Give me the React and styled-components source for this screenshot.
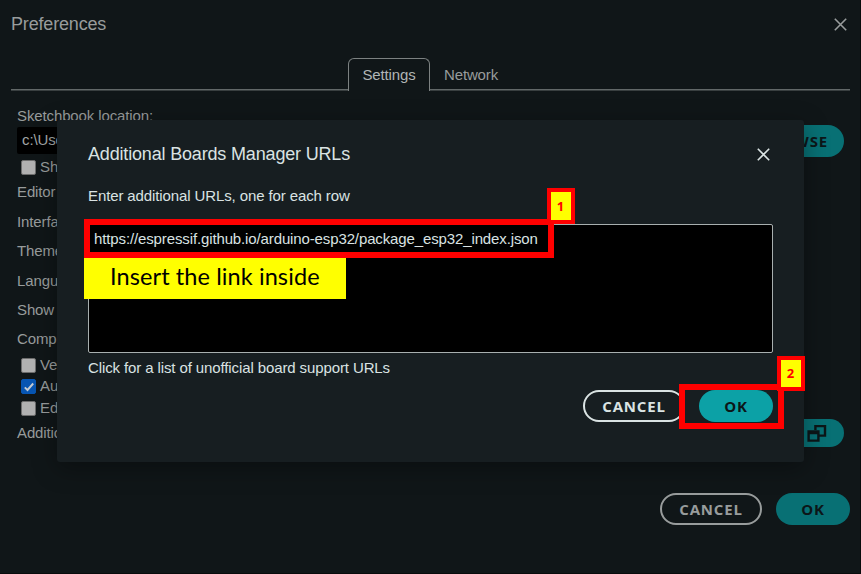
import React from 'react';
import styled, { createGlobalStyle, css } from 'styled-components';

const Global = createGlobalStyle`
  * { box-sizing: border-box; }
  body { margin: 0; background: #101618; font-family: "Liberation Sans", Arial, sans-serif; }
`;

const Window = styled.main`
  position: relative;
  width: 861px;
  height: 574px;
  overflow: hidden;
  display: flex;
  flex-direction: column;
  background: #101618;
  color: #989c9c;
  font-size: 15px;
  border-right: 1px solid #080b0c;
  border-bottom: 1px solid #080b0c;
`;

const WindowHeader = styled.header`
  display: flex;
  justify-content: space-between;
  align-items: center;
  height: 48px;
  padding: 0 12px 0 11px;
`;

const Title = styled.h1`
  margin: 0;
  font-size: 18px;
  line-height: 20px;
  font-weight: 400;
  letter-spacing: -0.17px;
`;

const CloseIcon = styled.svg`
  display: block;
  width: 15px;
  height: 15px;
  fill: none;
  stroke: currentColor;
  stroke-width: 1.6;
`;

const Close = () => (
  <CloseIcon viewBox="0 0 15 15"><path d="M1.8 1.8 13.2 13.2M13.2 1.8 1.8 13.2" /></CloseIcon>
);

const TabBar = styled.nav`
  display: flex;
  height: 43px;
  margin: 0 10px 0 11px;
  padding: 10px 0 0 337px;
  background: linear-gradient(#626868, #626868) 0 41px / 100% 1.5px no-repeat;
`;

const Tab = styled.div`
  height: 33px;
  width: ${(p) => p.$width}px;
  line-height: 34px;
  text-align: center;
  font-size: 15px;
  letter-spacing: -0.15px;
  ${(p) => p.$active && css`
    line-height: 32px;
    color: #b0b5b5;
    background: #101618;
    border: 1px solid #7c8181;
    border-bottom: 0;
    border-radius: 6px 6px 0 0;
  `}
`;

const Form = styled.section`
  display: flex;
  flex-direction: column;
  padding: 14px 16px 0 17px;
`;

const Row = styled.div`
  display: flex;
  align-items: center;
  flex: none;
  height: ${(p) => p.$height}px;
  padding-left: ${(p) => p.$indent || 0}px;
  letter-spacing: -0.12px;
  white-space: nowrap;
`;

const Label = styled.span`
  margin-top: -2px;
`;

const PathField = styled.div`
  flex: 1;
  height: 27px;
  margin-right: 10px;
  padding-left: 5px;
  line-height: 26px;
  color: #a2a6a6;
  background: #000;
  border-radius: 2px;
`;

const CheckBox = styled.span`
  display: flex;
  align-items: center;
  justify-content: center;
  width: 15px;
  height: 15px;
  margin-right: 4px;
  border: 1px solid ${(p) => (p.$checked ? '#0755b2' : '#6d6d6d')};
  border-radius: 2px;
  background: ${(p) => (p.$checked ? '#0755b2' : '#b1b1b1')};
`;

const Tick = () => (
  <svg width="12" height="12" viewBox="0 0 12 12" fill="none" stroke="#c4cbd2" strokeWidth="1.9">
    <path d="M1.8 6.3 4.5 9 10.2 2.5" />
  </svg>
);

const PillButton = styled.button`
  display: flex;
  align-items: center;
  justify-content: center;
  flex: none;
  width: ${(p) => p.$width}px;
  height: ${(p) => p.$height || 32}px;
  padding: 0;
  border-radius: 16px;
  font: 700 15px/20px "Open Sans", "Noto Sans", sans-serif;
  letter-spacing: 0.8px;
  border: ${(p) => (p.$outline ? '2px solid' : '0')};
  color: ${(p) => (p.$outline ? 'inherit' : '#0c1618')};
  background: ${(p) => (p.$outline ? 'transparent' : p.$bright ? '#0ca1a6' : '#087074')};
`;

const Spacer = styled.span`
  flex: 1;
`;

const WindowFooter = styled.footer`
  display: flex;
  justify-content: flex-end;
  gap: 14px;
  margin: 46px 10px 0 0;
`;

const Dialog = styled.section`
  position: absolute;
  left: 57px;
  top: 120px;
  width: 747px;
  height: 342px;
  padding: 0 31px;
  color: #dae3e3;
  background: #171e21;
  border-radius: 3px;
  box-shadow: 0 6px 24px rgba(0, 0, 0, 0.35);
`;

const DialogHeader = styled.header`
  display: flex;
  align-items: center;
  justify-content: space-between;
  height: 67px;
  padding: 1px 2px 0 0;
`;

const DialogText = styled.p`
  margin: 0;
  height: ${(p) => p.$height}px;
  line-height: 17px;
  letter-spacing: -0.11px;
`;

const UrlArea = styled.div`
  height: 129px;
  margin-bottom: 6px;
  padding: 5px 5px;
  line-height: 17px;
  letter-spacing: -0.125px;
  background: #000;
  border: 1px solid #a8afaf;
  border-radius: 2px;
`;

const DialogActions = styled.footer`
  display: flex;
  justify-content: flex-end;
  gap: 14px;
`;

const Highlight = styled.div`
  position: absolute;
  left: ${(p) => p.$x}px;
  top: ${(p) => p.$y}px;
  width: ${(p) => p.$width}px;
  height: ${(p) => p.$height}px;
  border: 6px solid #f00;
`;

const StepBadge = styled.div`
  position: absolute;
  left: ${(p) => p.$x}px;
  top: ${(p) => p.$y}px;
  width: 28px;
  height: ${(p) => p.$height}px;
  display: flex;
  align-items: center;
  justify-content: center;
  padding: 0 1px 1px 0;
  border: 4px solid #f00;
  color: #f00;
  background: #ff0;
  font: 700 13px/16px "Open Sans", sans-serif;
`;

const Callout = styled.div`
  position: absolute;
  left: 84px;
  top: 258px;
  width: 262px;
  height: 41px;
  padding-left: 26px;
  line-height: 37px;
  white-space: nowrap;
  color: #000;
  background: #ff0;
  font-family: Lato, sans-serif;
  font-size: 23.5px;
  letter-spacing: 0.1px;
`;

export default function App() {
  return (
    <>
      <Global />
      <Window>
        <WindowHeader><Title>Preferences</Title><Close /></WindowHeader>
        <TabBar>
          <Tab $active $width={82}>Settings</Tab>
          <Tab $width={82}>Network</Tab>
        </TabBar>
        <Form>
          <Row $height={20}>Sketchbook location:</Row>
          <Row $height={31}>
            <PathField>c:\Users</PathField>
            <PillButton $width={100}>BROWSE</PillButton>
          </Row>
          <Row $height={22} $indent={4}><CheckBox /><Label>Show</Label></Row>
          <Row $height={29}><Label>Editor</Label></Row>
          <Row $height={30}><Label>Interface</Label></Row>
          <Row $height={29}><Label>Theme</Label></Row>
          <Row $height={30}><Label>Language</Label></Row>
          <Row $height={29}><Label>Show</Label></Row>
          <Row $height={29}><Label>Compiler</Label></Row>
          <Row $height={22} $indent={4}><CheckBox /><Label>Verify</Label></Row>
          <Row $height={21} $indent={4}><CheckBox $checked><Tick /></CheckBox><Label>Auto</Label></Row>
          <Row $height={22} $indent={4}><CheckBox /><Label>Editor</Label></Row>
          <Row $height={28}>
            <Label>Additional</Label>
            <Spacer />
            <PillButton $width={55} $height={28}>
              <svg width="20" height="18" viewBox="0 0 20 18" fill="none" stroke="currentColor" strokeWidth="2.4">
                <path d="M8.4 6V2.1h9.6v9.5h-6M1.6 7.4h9.8v9.2H1.6zM1.6 9h9.8" />
              </svg>
            </PillButton>
          </Row>
        </Form>
        <WindowFooter>
          <PillButton $outline $width={102}>CANCEL</PillButton>
          <PillButton $width={74}>OK</PillButton>
        </WindowFooter>
        <Dialog>
          <DialogHeader><Title>Additional Boards Manager URLs</Title><Close /></DialogHeader>
          <DialogText $height={37}>Enter additional URLs, one for each row</DialogText>
          <UrlArea>https://espressif.github.io/arduino-esp32/package_esp32_index.json</UrlArea>
          <DialogText $height={31}>Click for a list of unofficial board support URLs</DialogText>
          <DialogActions>
            <PillButton $outline $width={102}>CANCEL</PillButton>
            <PillButton $bright $width={74}>OK</PillButton>
          </DialogActions>
        </Dialog>
        <Highlight $x={679} $y={384} $width={105} $height={45} />
        <Highlight $x={84} $y={219} $width={470} $height={39} />
        <StepBadge $x={547} $y={188} $height={36}>1</StepBadge>
        <StepBadge $x={777} $y={356} $height={35}>2</StepBadge>
        <Callout>Insert the link inside</Callout>
      </Window>
    </>
  );
}
